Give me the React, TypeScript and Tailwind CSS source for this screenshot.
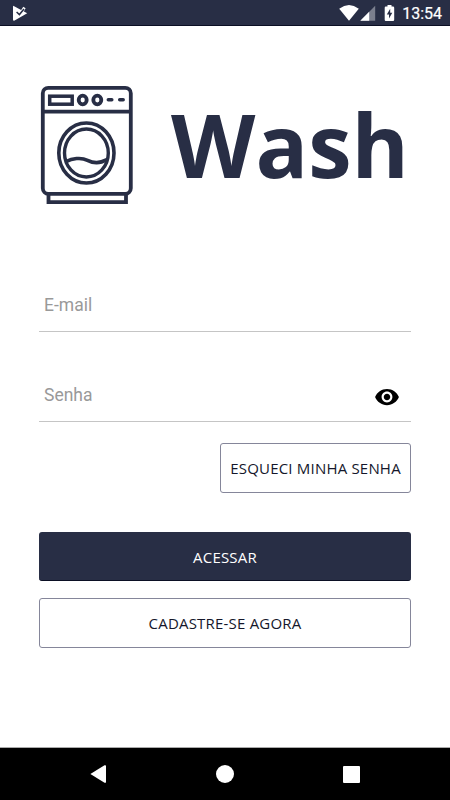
function StatusBar() {
  return (
    <header className="flex h-[26px] items-start border-b border-[#0b0f24] bg-[#282e45] text-white">
      <svg className="ml-3 mt-[5px] h-4 w-4" viewBox="0 0 16 16">
        <path d="M1.2 .8 15.2 8.2 2.6 15.6Q1 16 1 14.500V1.500Z" fill="#fff" />
        <path d="M8.800 5.400 11.300 1.800 13.600 3.300 11.500 6.900Z" fill="#fff" />
        <path d="M4.600 7 7.400 9.600 12 4" fill="none" stroke="#282e45" strokeWidth="1.500" />
      </svg>
      <div className="ml-auto flex">
        <svg className="mt-[5px] h-4 w-5" viewBox="0 0 20 16">
          <path d="M.2 3.700Q10-3.500 19.800 3.700L10 15.800Z" fill="#fff" />
        </svg>
        <svg className="ml-px mt-[5px] h-4 w-4" viewBox="0 0 16 16">
          <path d="M.3 15.700 15.200.8V15.700Z" fill="#7b7f8e" />
          <path d="M.3 15.700 9.200 6.800V15.700Z" fill="#fff" />
        </svg>
        <svg className="ml-2 mt-[5px] h-4 w-[11px]" viewBox="0 0 11 16">
          <path d="M3.500 0h4v1.500H9q1.200 0 1.200 1.200v12Q10.200 16 9 16H1.800Q.7 16 .7 14.700v-12Q.7 1.500 1.800 1.500h1.700Z" fill="#fff" />
          <path d="M6.200 3.800 2.800 9.500h2.200v4L8.300 7.800H6.200Z" fill="#282e45" />
        </svg>
        <span className="ml-[7px] mr-2 mt-[3px] font-['Roboto'] text-base/[22px] [-webkit-text-stroke:0.2px_white]">13:54</span>
      </div>
    </header>
  );
}

function WasherLogo() {
  return (
    <svg className="h-[124px] w-24" viewBox="0 0 96 124" fill="none" stroke="#282e45" strokeWidth="3.800">
      <rect x="3.800" y="4.800" width="88" height="106" rx="5.500" />
      <path d="M3.800 28.700h88M9.500 111v8.200h77.500V111" />
      <rect x="10.700" y="13.200" width="22.500" height="8" strokeWidth="3.500" />
      <ellipse cx="43.700" cy="17" rx="4" ry="4.300" />
      <ellipse cx="58.300" cy="17" rx="4" ry="4.300" />
      <path d="M69.300 16.800h3.500M80.700 16.800h3.500" strokeWidth="3.500" strokeLinecap="round" />
      <ellipse cx="47.400" cy="70" rx="27.600" ry="30" strokeWidth="3.600" />
      <ellipse cx="47.400" cy="70" rx="21.900" ry="24" strokeWidth="3.400" />
      <path d="M27 78.600C33 75.500 42 74 48.500 77.300 55 80.500 60 80.500 68.500 76.500" strokeWidth="3.600" />
    </svg>
  );
}

const outlined = "h-[50px] rounded-[3px] border border-[#85869a] bg-white text-[15px] tracking-[0.2px] text-[#15172b]";

export default function App() {
  return (
    <div className="flex h-[800px] w-[450px] flex-col overflow-hidden bg-white font-['Open_Sans',sans-serif]">
      <StatusBar />
      <main className="flex flex-1 flex-col px-[39px] pt-[57px]">
        <div className="flex h-[124px]">
          <WasherLogo />
          <h1 className="ml-9 mt-0.5 text-[87.300px]/[120px] font-bold text-[#282e45]">Wash</h1>
        </div>
        <div className="mt-[77px] flex h-12 items-start border-b border-[#c5c5c5] font-['Roboto'] text-[17.500px] text-[#999]">
          <input className="mt-[7px] w-full pl-[5px] leading-7 outline-none placeholder:text-[#999]" placeholder="E-mail" />
        </div>
        <div className="mt-[42px] flex h-12 items-start border-b border-[#c5c5c5] font-['Roboto'] text-[17.500px] text-[#999]">
          <input className="mt-[7px] w-0 flex-1 pl-[5px] leading-7 outline-none placeholder:text-[#999]" placeholder="Senha" />
          <svg className="mr-[11px] mt-[10px] h-[26px] w-[26px]" viewBox="0 0 24 24" fill="#000">
            <path d="M12 4.500C7 4.500 2.730 7.610 1 12c1.730 4.390 6 7.500 11 7.500s9.270-3.110 11-7.500c-1.730-4.390-6-7.500-11-7.500zM12 17c-2.760 0-5-2.240-5-5s2.240-5 5-5 5 2.240 5 5-2.240 5-5 5zm0-8c-1.660 0-3 1.340-3 3s1.340 3 3 3 3-1.340 3-3-1.340-3-3-3z" />
          </svg>
        </div>
        <button className={`${outlined} mt-[21px] w-[191px] self-end`}>ESQUECI MINHA SENHA</button>
        <button className="mt-[39px] h-[49px] rounded-[3px] border-b border-[#0b0f24] bg-[#282e45] pt-0.5 text-[15px] tracking-[0.2px] text-white">ACESSAR</button>
        <button className={`${outlined} mt-[17px]`}>CADASTRE-SE AGORA</button>
      </main>
      <nav className="flex h-[53px] items-center border-t border-[#aaa] bg-black">
        <svg className="ml-[90px] h-[18px] w-4" viewBox="0 0 16 18" fill="#fff"><path d="M.4 9 14.500.3Q16-.2 16 1v16q0 1.200-1.500.7Z" /></svg>
        <div className="ml-[110px] h-[18px] w-[18px] rounded-full bg-white" />
        <div className="ml-[109px] h-[17px] w-[17px] rounded-[1px] bg-white" />
      </nav>
    </div>
  );
}
